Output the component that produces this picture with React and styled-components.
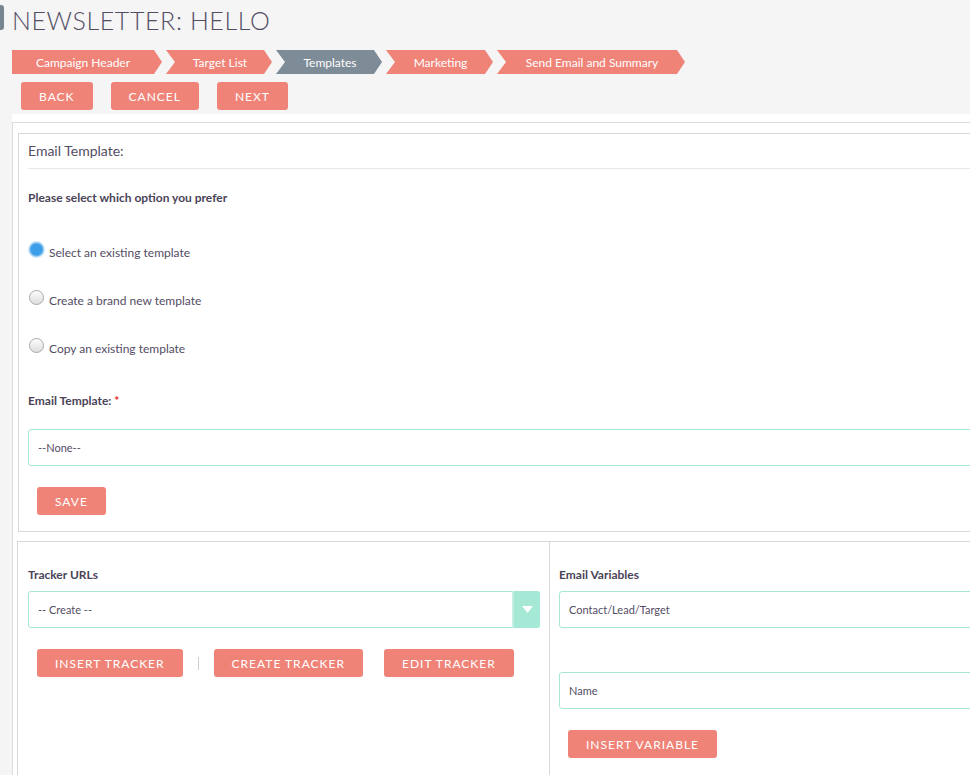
import React from 'react';
import styled, { createGlobalStyle } from 'styled-components';

const GlobalStyle = createGlobalStyle`
    html, body {
        margin: 0;
        padding: 0;
        overflow: hidden;
        background: #f5f5f5;
    }
    * {
        box-sizing: border-box;
    }
    body {
        font-family: Lato, "Open Sans", sans-serif;
        color: #534d64;
    }
`;

const steps = [
    { label: 'Campaign Header', width: 150, first: true },
    { label: 'Target List', width: 106 },
    { label: 'Templates', width: 106, active: true },
    { label: 'Marketing', width: 107 },
    { label: 'Send Email and Summary', width: 188 },
];

const App = () => {
    return (
        <Page>
            <GlobalStyle />
            <TitleRow>
                <AccentBar />
                <Title>NEWSLETTER: HELLO</Title>
            </TitleRow>

            <Steps>
                {steps.map((s) => (
                    <Step key={s.label} $width={s.width} $first={s.first} $active={s.active}>
                        {s.label}
                    </Step>
                ))}
            </Steps>

            <ActionRow>
                <Button>Back</Button>
                <Button>Cancel</Button>
                <Button>Next</Button>
            </ActionRow>

            <Sheet>
                <Frame>
                    <Panel>
                        <PanelHeader>Email Template:</PanelHeader>
                        <FieldLabel $top={21}>Please select which option you prefer</FieldLabel>

                        <RadioGroup>
                            <RadioRow>
                                <Radio $checked />
                                <RadioLabel>Select an existing template</RadioLabel>
                            </RadioRow>
                            <RadioRow>
                                <Radio />
                                <RadioLabel>Create a brand new template</RadioLabel>
                            </RadioRow>
                            <RadioRow>
                                <Radio />
                                <RadioLabel>Copy an existing template</RadioLabel>
                            </RadioRow>
                        </RadioGroup>

                        <FieldLabel $top={38}>
                            Email Template: <Required>*</Required>
                        </FieldLabel>
                        <SelectBox $top={20}>--None--</SelectBox>
                        <ButtonRow $top={21}>
                            <Button>Save</Button>
                        </ButtonRow>
                    </Panel>

                    <SplitPanel>
                        <Column $left>
                            <FieldLabel $top={25}>Tracker URLs</FieldLabel>
                            <SelectBox $top={8}>
                                -- Create --
                                <SelectArrow>
                                    <svg width="11" height="7" viewBox="0 0 11 7">
                                        <path d="M0 0 H11 L5.5 7 Z" fill="#fff" />
                                    </svg>
                                </SelectArrow>
                            </SelectBox>
                            <ButtonRow $top={21}>
                                <Button>Insert Tracker</Button>
                                <Separator />
                                <Button>Create Tracker</Button>
                                <Button $gap={21}>Edit Tracker</Button>
                            </ButtonRow>
                        </Column>
                        <Column>
                            <FieldLabel $top={25}>Email Variables</FieldLabel>
                            <SelectBox $top={8}>Contact/Lead/Target</SelectBox>
                            <SelectBox $top={44}>Name</SelectBox>
                            <ButtonRow $top={21}>
                                <Button>Insert Variable</Button>
                            </ButtonRow>
                        </Column>
                    </SplitPanel>
                </Frame>
            </Sheet>
        </Page>
    );
};

export default App;

// Styled Components
const Page = styled.div`
    width: 1280px;
    min-height: 775px;
    background: #f5f5f5;
`;

const TitleRow = styled.div`
    display: flex;
    align-items: flex-start;
    padding-top: 5px;
`;

const AccentBar = styled.div`
    width: 4px;
    height: 25px;
    background: #778591;
    border-radius: 0 3px 3px 0;
    margin-right: 8px;
`;

const Title = styled.h1`
    margin: 3px 0 0;
    font-size: 25px;
    line-height: 25px;
    font-weight: 300;
    letter-spacing: 0.6px;
    color: #534d64;
`;

const Steps = styled.div`
    display: flex;
    gap: 4px;
    padding-left: 12px;
    margin-top: 17px;
`;

const Step = styled.div`
    width: ${(p) => p.$width}px;
    height: 24px;
    display: flex;
    align-items: center;
    justify-content: center;
    padding: ${(p) => (p.$first ? '0 8px 0 0' : '0 3px 0 5px')};
    font-size: 12px;
    color: #fff;
    background: ${(p) => (p.$active ? '#7e8c98' : '#f08377')};
    clip-path: ${(p) =>
        p.$first
            ? 'polygon(0 0, calc(100% - 8px) 0, 100% 50%, calc(100% - 8px) 100%, 0 100%)'
            : 'polygon(0 0, calc(100% - 8px) 0, 100% 50%, calc(100% - 8px) 100%, 0 100%, 9px 50%)'};
`;

const ActionRow = styled.div`
    display: flex;
    gap: 18px;
    padding-left: 21px;
    margin-top: 8px;
`;

const Button = styled.button`
    height: 28px;
    padding: 0 18px;
    margin-left: ${(p) => (p.$gap ? `${p.$gap - 15}px` : '0')};
    border: none;
    border-radius: 3px;
    background: #f08377;
    color: #fff;
    font-family: Lato, "Open Sans", sans-serif;
    font-size: 12px;
    letter-spacing: 1px;
    text-transform: uppercase;
    cursor: pointer;

    &:hover {
        background: #ee6f61;
    }
`;

const Sheet = styled.div`
    margin: 4px 0 0 12px;
    padding-top: 8px;
    background: #fff;
`;

const Frame = styled.div`
    border-top: 1px solid #dcdcdc;
    border-left: 1px solid #dcdcdc;
    padding: 10px 0 0 5px;
    min-height: 700px;
`;

const Panel = styled.div`
    border: 1px solid #d8d8d8;
    padding: 0 0 16px 9px;
`;

const PanelHeader = styled.div`
    height: 35px;
    line-height: 34px;
    font-size: 14px;
    border-bottom: 1px solid #e8e8e8;
`;

const FieldLabel = styled.div`
    margin-top: ${(p) => p.$top}px;
    font-size: 12px;
    line-height: 16px;
    font-weight: 700;
    color: #4a4458;
`;

const Required = styled.span`
    color: #e4262c;
`;

const RadioGroup = styled.div`
    display: flex;
    flex-direction: column;
    gap: 31px;
    margin-top: 36px;
`;

const RadioRow = styled.div`
    display: flex;
    align-items: flex-start;
    height: 17px;
    padding-left: 1px;
`;

const Radio = styled.span`
    width: 15px;
    height: 15px;
    border-radius: 50%;
    margin-right: 5px;
    flex-shrink: 0;
    border: 1px solid ${(p) => (p.$checked ? '#8cc4ef' : '#a9a9a9')};
    background: ${(p) =>
        p.$checked
            ? 'radial-gradient(circle, #3c9ee8 0 5.5px, #5aaeed 6px)'
            : 'linear-gradient(#fcfcfc, #dedede)'};
    box-shadow: ${(p) => (p.$checked ? '0 0 0 1px #cfe6f8' : 'none')};
`;

const RadioLabel = styled.span`
    margin-top: 3px;
    font-size: 12px;
    line-height: 15px;
`;

const SelectBox = styled.div`
    position: relative;
    height: 37px;
    margin-top: ${(p) => p.$top}px;
    padding-left: 9px;
    display: flex;
    align-items: center;
    border: 1px solid #a5e8d6;
    border-radius: 3px;
    background: #fff;
    font-size: 11px;
    color: #534d64;
`;

const SelectArrow = styled.span`
    position: absolute;
    top: -1px;
    right: -1px;
    bottom: -1px;
    width: 28px;
    display: flex;
    align-items: center;
    justify-content: center;
    background: #a5e8d6;
    border-left: 2px solid #c4f0e4;
    border-radius: 0 3px 3px 0;
`;

const ButtonRow = styled.div`
    display: flex;
    align-items: center;
    gap: 15px;
    margin-top: ${(p) => p.$top}px;
    padding-left: 9px;
`;

const Separator = styled.span`
    width: 1px;
    height: 13px;
    background: #cfcfcf;
`;

const SplitPanel = styled.div`
    display: grid;
    grid-template-columns: 531px 1fr;
    margin: 9px 0 0 -1px;
    border: 1px solid #d8d8d8;
    min-height: 260px;
`;

const Column = styled.div`
    padding: 0 ${(p) => (p.$left ? '9px' : '0')} 0 ${(p) => (p.$left ? '10px' : '9px')};
    border-left: ${(p) => (p.$left ? 'none' : '1px solid #d8d8d8')};
`;
